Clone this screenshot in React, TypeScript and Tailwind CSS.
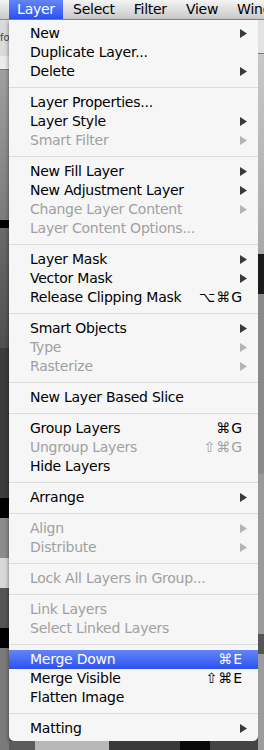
import React from 'react';

type Item =
  | { sep: true }
  | { label: string; disabled?: boolean; sub?: boolean; keys?: string; active?: boolean; sep?: false };

const items: Item[] = [
  { label: 'New', sub: true },
  { label: 'Duplicate Layer...' },
  { label: 'Delete', sub: true },
  { sep: true },
  { label: 'Layer Properties...' },
  { label: 'Layer Style', sub: true },
  { label: 'Smart Filter', sub: true, disabled: true },
  { sep: true },
  { label: 'New Fill Layer', sub: true },
  { label: 'New Adjustment Layer', sub: true },
  { label: 'Change Layer Content', sub: true, disabled: true },
  { label: 'Layer Content Options...', disabled: true },
  { sep: true },
  { label: 'Layer Mask', sub: true },
  { label: 'Vector Mask', sub: true },
  { label: 'Release Clipping Mask', keys: '⌥⌘G' },
  { sep: true },
  { label: 'Smart Objects', sub: true },
  { label: 'Type', sub: true, disabled: true },
  { label: 'Rasterize', sub: true, disabled: true },
  { sep: true },
  { label: 'New Layer Based Slice' },
  { sep: true },
  { label: 'Group Layers', keys: '⌘G' },
  { label: 'Ungroup Layers', keys: '⇧⌘G', disabled: true },
  { label: 'Hide Layers' },
  { sep: true },
  { label: 'Arrange', sub: true },
  { sep: true },
  { label: 'Align', sub: true, disabled: true },
  { label: 'Distribute', sub: true, disabled: true },
  { sep: true },
  { label: 'Lock All Layers in Group...', disabled: true },
  { sep: true },
  { label: 'Link Layers', disabled: true },
  { label: 'Select Linked Layers', disabled: true },
  { sep: true },
  { label: 'Merge Down', keys: '⌘E', active: true },
  { label: 'Merge Visible', keys: '⇧⌘E' },
  { label: 'Flatten Image' },
  { sep: true },
  { label: 'Matting', sub: true },
];

function Arrow({ color }: { color: string }) {
  return (
    <svg width="7" height="9" viewBox="0 0 7 9" className="shrink-0">
      <polygon points="0,0 7,4.5 0,9" fill={color} />
    </svg>
  );
}

function MenuRow({ item }: { item: Exclude<Item, { sep: true }> }) {
  const text = item.active ? 'text-white' : item.disabled ? 'text-[#a0a0a0]' : 'text-black';
  const arrowColor = item.active ? '#ffffff' : item.disabled ? '#b4b4b4' : '#3a3a3a';
  return (
    <div
      className={`flex items-center h-[19px] pl-[21px] pr-[11px] ${text} ${
        item.active ? 'bg-gradient-to-b from-[#6584f8] to-[#2b50ef]' : ''
      }`}
    >
      <span className="flex-1 whitespace-nowrap tracking-[-0.25px]">{item.label}</span>
      {item.keys && <span className="pr-[4px] tracking-[1px] whitespace-nowrap">{item.keys}</span>}
      {item.sub && <Arrow color={arrowColor} />}
    </div>
  );
}

export default function App() {
  return (
    <div className="w-[264px] h-[750px] overflow-hidden bg-[#5a5a5a] flex flex-col font-['DejaVu_Sans',sans-serif] text-[14px]">
      {/* menu bar */}
      <div className="h-[20px] flex items-center overflow-hidden bg-gradient-to-b from-[#f4f4f4] to-[#c9c9c9] border-b border-[#8a8a8a] shrink-0 tracking-[-0.25px]">
        <div className="w-[9px] shrink-0" />
        <div className="h-full w-[54px] shrink-0 flex items-center justify-center text-white bg-gradient-to-b from-[#6584f8] to-[#2b50ef]">
          Layer
        </div>
        <div className="flex gap-[19px] pl-[10px] text-black whitespace-nowrap shrink-0">
          <span>Select</span>
          <span>Filter</span>
          <span>View</span>
          <span>Window</span>
        </div>
      </div>

      <div className="flex flex-1 min-h-0">
        {/* canvas strip left */}
        <div className="w-[9px] flex flex-col shrink-0">
          <div className="h-[36px] bg-[#dadada] text-[10px] text-[#444] pt-[10px] overflow-hidden">fo</div>
          <div className="h-[14px] bg-[#ececec] border-b border-[#777]" />
          <div className="h-[150px] bg-gradient-to-b from-[#a0a0a0] to-[#7c7c7c]" />
          <div className="h-[8px] bg-black" />
          <div className="h-[120px] bg-gradient-to-b from-[#6a6a6a] to-[#505050]" />
          <div className="h-[150px] bg-[#3c3c3c]" />
          <div className="h-[20px] bg-black" />
          <div className="h-[40px] bg-[#8c8c8c]" />
          <div className="h-[30px] bg-[#d8d8d8]" />
          <div className="h-[40px] bg-[#555]" />
          <div className="h-[20px] bg-black" />
          <div className="flex-1 bg-[#7a7a7a]" />
        </div>

        {/* menu */}
        <div className="w-[249px] shrink-0 flex flex-col">
          <div className="bg-[#f6f6f6] rounded-b-[5px] pt-[4px] pb-[3px] shadow-[0_2px_4px_rgba(0,0,0,0.5)]">
            {items.map((it, i) =>
              it.sep ? (
                <div key={i} className="h-[12px] flex items-center">
                  <div className="h-px w-full bg-[#dcdcdc]" />
                </div>
              ) : (
                <MenuRow key={i} item={it} />
              )
            )}
          </div>
          <div className="flex-1 flex">
            <div className="w-[26px] bg-[#5c5c5c]" />
            <div className="w-[74px] bg-[#b8b8b8]" />
            <div className="w-[71px] bg-[#3a3a3a]" />
            <div className="w-[30px] bg-[#0a0a0a]" />
            <div className="flex-1 bg-[#444]" />
          </div>
        </div>

        {/* canvas strip right */}
        <div className="flex-1 flex flex-col">
          <div className="h-[34px] bg-[#e2e2e2] border-b border-[#777]" />
          <div className="h-[200px] bg-gradient-to-b from-[#c8c8c8] to-[#a8a8a8]" />
          <div className="h-[40px] bg-[#1a1a1a]" />
          <div className="h-[180px] bg-[#8a8a8a]" />
          <div className="h-[160px] bg-[#9a9a9a]" />
          <div className="h-[20px] bg-[#555]" />
          <div className="flex-1 bg-[#9c9c9c]" />
        </div>
      </div>
    </div>
  );
}
